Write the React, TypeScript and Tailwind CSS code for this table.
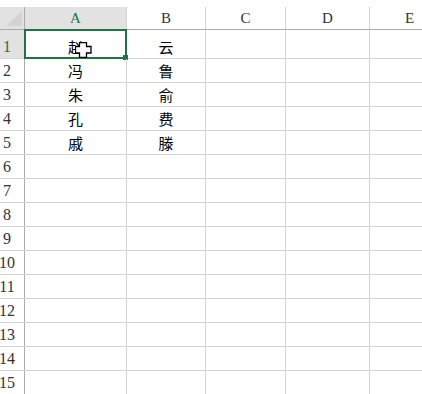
import React from 'react';

const cols = ['A', 'B', 'C', 'D', 'E'];
const colWidths = ['w-[102px]', 'w-[79px]', 'w-[80px]', 'w-[84px]', 'w-[80px]'];

const data: Record<number, [string, string]> = {
  1: ['赵', '云'],
  2: ['冯', '鲁'],
  3: ['朱', '俞'],
  4: ['孔', '费'],
  5: ['戚', '滕'],
};

const serif = { fontFamily: '"Liberation Serif", serif' };
const cjk = { fontFamily: '"Noto Sans CJK SC", sans-serif' };

// Excel's fat white plus pointer
function CellCursor() {
  return (
    <svg width="17" height="16" viewBox="0 0 17 16" className="absolute left-[50px] top-[12px]">
      <polygon
        points="4.5,0.5 11.5,0.5 11.5,4.5 16,4.5 16,11 11.5,11 11.5,15.5 4.5,15.5 4.5,11 0.5,11 0.5,4.5 4.5,4.5"
        fill="#fff"
        stroke="#000"
        strokeWidth="1.3"
      />
    </svg>
  );
}

export default function App() {
  const rows = Array.from({ length: 15 }, (_, i) => i + 1);

  return (
    <div className="w-[422px] h-[394px] overflow-hidden bg-white pt-[7px]">
      {/* column headers */}
      <div className="flex h-[23px] border-b border-[#ababab]">
        <div className="w-[25px] shrink-0 bg-[#e2e2e2] border-r border-[#ababab] flex items-end justify-end pr-[2px] pb-[3px]">
          <div className="w-0 h-0 border-l-[16px] border-l-transparent border-b-[15px] border-b-[#d3d3d3]" />
        </div>
        {cols.map((c, i) => (
          <div
            key={c}
            className={`${colWidths[i]} shrink-0 border-r border-[#d4d4d4] flex items-end justify-center pb-[2px] text-[15px] leading-[18px] ${
              c === 'A' ? 'bg-[#e2e2e2] text-[#217346]' : 'text-[#333]'
            }`}
            style={serif}
          >
            {c}
          </div>
        ))}
      </div>

      {rows.map((r) => (
        <div key={r} className={`flex border-b border-[#d4d4d4] ${r === 1 ? 'h-[29px]' : 'h-[24px]'}`}>
          <div
            className={`w-[25px] shrink-0 border-r border-[#ababab] overflow-hidden flex items-end pb-[2px] ${
              r === 1 ? 'bg-[#e2e2e2] text-[#217346]' : 'text-[#333]'
            }`}
          >
            <div
              className="w-[14px] shrink-0 flex justify-center text-[16px] leading-[18px] whitespace-nowrap"
              style={serif}
            >
              {r}
            </div>
          </div>
          {cols.map((c, i) => (
            <div
              key={c}
              className={`${colWidths[i]} shrink-0 border-r border-[#d4d4d4] relative flex items-end justify-center pb-[2px] text-[15px] leading-[19px] text-black`}
              style={cjk}
            >
              {data[r] && i < 2 ? data[r][i] : ''}
              {r === 1 && i === 0 && (
                <>
                  <div className="absolute left-[-1px] top-[-1px] w-[103px] h-[30px] border-2 border-[#217346] pointer-events-none" />
                  <div className="absolute left-[98px] top-[25px] w-[5px] h-[5px] bg-[#217346]" />
                  <CellCursor />
                </>
              )}
            </div>
          ))}
        </div>
      ))}
    </div>
  );
}
